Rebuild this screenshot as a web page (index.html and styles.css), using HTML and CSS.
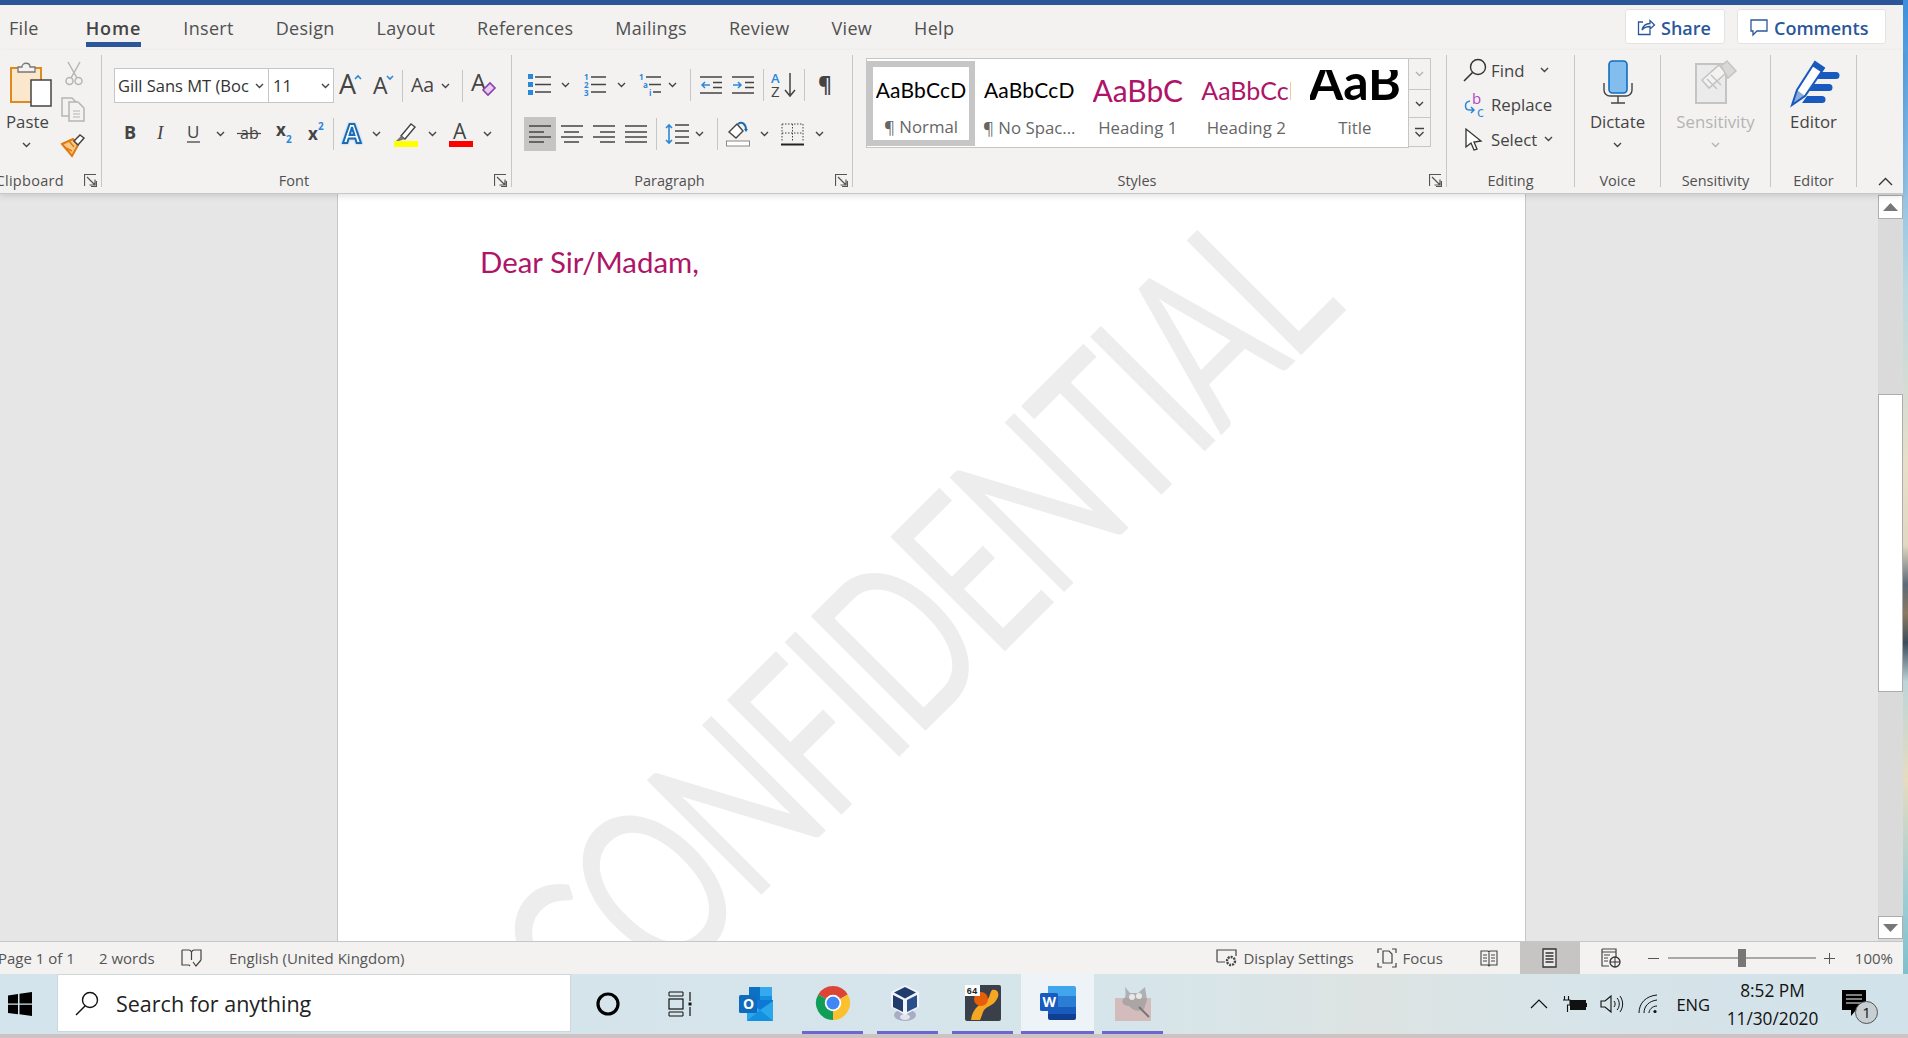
FILE: index.html
```html
<!DOCTYPE html>
<html lang="en">
<head>
<meta charset="utf-8">
<title>Word document</title>
<link rel="stylesheet" href="styles.css">
</head>
<body>
<svg class="defs" width="0" height="0" aria-hidden="true">
  <defs>
    <symbol id="chev" viewBox="0 0 9 6"><path d="M1 1l3.5 3.5L8 1" fill="none" stroke="#444" stroke-width="1.4"/></symbol>
    <symbol id="launch" viewBox="0 0 13 13"><path d="M.5 12V.5H12M3 3l8 8M11 5.5V11H5.5M12.5 7v5.500H7" fill="none" stroke="#555" stroke-width="1.200"/></symbol>
  </defs>
</svg>
<div class="screen">
  <div class="upper">
    <div class="window">
      <div class="accent"></div>
      <nav class="tabs">
        <span class="tab tab-file">File</span>
        <span class="tab tab-active">Home</span>
        <span class="tab">Insert</span>
        <span class="tab">Design</span>
        <span class="tab">Layout</span>
        <span class="tab">References</span>
        <span class="tab">Mailings</span>
        <span class="tab">Review</span>
        <span class="tab">View</span>
        <span class="tab">Help</span>
        <div class="share-btns">
          <button class="pill pill-share">
            <svg width="18" height="17" viewBox="0 0 18 17"><path d="M6 3H1.500v12.500H13V11M5 11c1-4 4-6.500 8-6.500V1.500l4.500 4.500L13 10V7.500c-3 0-6 1-8 3.500z" fill="none" stroke="#2b579a" stroke-width="1.300"/></svg>
            Share</button>
          <button class="pill pill-comments">
            <svg width="18" height="17" viewBox="0 0 18 17"><path d="M1 1h16v11H7l-4 4v-4H1z" fill="none" stroke="#2b579a" stroke-width="1.300"/></svg>
            Comments</button>
        </div>
      </nav>

      <section class="ribbon">
        <div class="group group-clip">
          <div class="clip-body">
            <div class="big paste">
              <svg width="42" height="46" viewBox="0 0 42 46">
                <rect x="1" y="7" width="30" height="34" fill="#fbe8cc" stroke="#e08a1e" stroke-width="2"/>
                <path d="M8 11V6h4c0-5 8-5 8 0h5v5z" fill="#f3f2f1" stroke="#777" stroke-width="1.300"/>
                <rect x="21" y="19" width="20" height="26" fill="#fff" stroke="#444" stroke-width="1.500"/>
              </svg>
              <span class="big-label">Paste</span>
              <svg class="big-chev" width="9" height="6"><use href="#chev"/></svg>
            </div>
            <div class="clip-tools">
              <svg width="18" height="25" viewBox="0 0 18 25"><path d="M3 1l9 16M15 1L6 17" fill="none" stroke="#b5b5b5" stroke-width="1.500"/><circle cx="4.500" cy="20" r="3.500" fill="none" stroke="#b5b5b5" stroke-width="1.500"/><circle cx="13.500" cy="20" r="3.500" fill="none" stroke="#b5b5b5" stroke-width="1.500"/></svg>
              <svg width="25" height="25" viewBox="0 0 25 25"><path d="M11 19H1V1h10l4 4" fill="none" stroke="#b5b5b5" stroke-width="1.500"/><path d="M8 5h9l6 6v13H8z" fill="#f3f2f1" stroke="#b5b5b5" stroke-width="1.500"/><path d="M12 14h7M12 17h7M12 20h7" stroke="#b5b5b5"/></svg>
              <svg width="25" height="24" viewBox="0 0 25 24"><path d="M1 11l11-5 5 6-6 11z" fill="#f9c98a" stroke="#e07b10" stroke-width="2"/><path d="M5 15l6 3M8 8l5 6" stroke="#e07b10" stroke-width="1.500"/><path d="M13 8l6-6 4 3-6 7z" fill="#fff" stroke="#444" stroke-width="1.500"/></svg>
            </div>
          </div>
          <div class="label-row"><span class="label label-clip">Clipboard</span><svg class="launch" width="13" height="13"><use href="#launch"/></svg></div>
        </div>

        <div class="group group-font">
          <div class="rows">
            <div class="row">
              <div class="combo combo-font ml12"><span class="combo-text">Gill Sans MT (Boc</span><svg width="9" height="6"><use href="#chev"/></svg></div>
              <div class="combo combo-size"><span class="combo-text">11</span><svg width="9" height="6"><use href="#chev"/></svg></div>
              <svg class="ml5" width="23" height="26" viewBox="0 0 23 26"><text class="ico-t" x="0" y="21" font-size="27">A</text><path d="M16 6l3-3 3 3" fill="none" stroke="#2b88d8" stroke-width="1.600"/></svg>
              <svg class="ml11" width="21" height="26" viewBox="0 0 21 26"><text class="ico-t" x="0" y="21" font-size="23">A</text><path d="M14 3l3 3 3-3" fill="none" stroke="#2b88d8" stroke-width="1.600"/></svg>
              <span class="vsep ml8"></span>
              <svg class="ml8" width="28" height="26" viewBox="0 0 28 26"><text class="ico-t" x="0" y="19" font-size="19.500">Aa</text></svg>
              <svg class="ml2" width="9" height="6"><use href="#chev"/></svg>
              <span class="vsep ml12"></span>
              <svg class="ml8" width="25" height="26" viewBox="0 0 25 26"><text class="ico-t" x="0" y="18" font-size="24">A</text><path d="M12 17l7-7 5 5-7 7z" fill="#e6cdf0" stroke="#8b3fae" stroke-width="1.600"/></svg>
            </div>
            <div class="row row2">
              <svg class="ml22" width="12" height="18" viewBox="0 0 12 18"><text class="ico-t ico-b" x="0" y="14" font-size="18">B</text></svg>
              <svg class="ml21" width="10" height="18" viewBox="0 0 10 18"><text class="ico-t ico-i" x="0" y="14" font-size="19">I</text></svg>
              <svg class="ml20" width="13" height="20" viewBox="0 0 13 20"><text class="ico-t" x="0" y="14" font-size="17">U</text><path d="M0 18h13" stroke="#444" stroke-width="1.300"/></svg>
              <svg class="ml16" width="9" height="6"><use href="#chev"/></svg>
              <svg class="ml12" width="24" height="20" viewBox="0 0 24 20"><text class="ico-t" x="3" y="15" font-size="16">ab</text><path d="M0 9.500h24" stroke="#444" stroke-width="1.200"/></svg>
              <svg class="ml15" width="16" height="24" viewBox="0 0 16 24"><text class="ico-t ico-b" x="0" y="14" font-size="17">x</text><text class="ico-sub" x="10" y="21" font-size="10">2</text></svg>
              <svg class="ml16" width="16" height="24" viewBox="0 0 16 24"><text class="ico-t ico-b" x="0" y="18" font-size="17">x</text><text class="ico-sub" x="10" y="8" font-size="10">2</text></svg>
              <span class="vsep ml9"></span>
              <svg class="ml8" width="23" height="24" viewBox="0 0 23 24"><text class="ico-effect" x="1" y="21" font-size="26">A</text></svg>
              <svg class="ml7" width="9" height="6"><use href="#chev"/></svg>
              <svg class="ml13" width="24" height="26" viewBox="0 0 24 26"><path d="M7 15L17 3l4 3-10 12z" fill="#fff" stroke="#444" stroke-width="1.400"/><path d="M7 15l4 3-6 2H2z" fill="#777"/><rect y="20" width="24" height="6" fill="#ff0"/></svg>
              <svg class="ml10" width="9" height="6"><use href="#chev"/></svg>
              <svg class="ml12" width="24" height="26" viewBox="0 0 24 26"><text class="ico-t" x="4" y="18" font-size="21">A</text><rect y="20" width="24" height="6" fill="#f00"/></svg>
              <svg class="ml10" width="9" height="6"><use href="#chev"/></svg>
            </div>
          </div>
          <div class="label-row"><span class="label">Font</span><svg class="launch" width="13" height="13"><use href="#launch"/></svg></div>
        </div>

        <div class="group group-para">
          <div class="rows">
            <div class="row">
              <svg class="ml16" width="23" height="23" viewBox="0 0 23 23"><path d="M7 4h16M7 11.500h16M7 19h16" stroke="#444" stroke-width="1.500"/><path d="M0 1h5v5H0zM0 9h5v5H0zM0 17h5v5H0z" fill="#2b88d8"/></svg>
              <svg class="ml10" width="9" height="6"><use href="#chev"/></svg>
              <svg class="ml13" width="23" height="23" viewBox="0 0 23 23"><path d="M8 4h15M8 11.500h15M8 19h15" stroke="#444" stroke-width="1.500"/><text class="ico-num" x="1" y="7" font-size="8">1</text><text class="ico-num" x="1" y="15" font-size="8">2</text><text class="ico-num" x="1" y="23" font-size="8">3</text></svg>
              <svg class="ml11" width="9" height="6"><use href="#chev"/></svg>
              <svg class="ml12" width="23" height="23" viewBox="0 0 23 23"><path d="M8 4h15M11 11.500h12M15 19h8" stroke="#444" stroke-width="1.500"/><text class="ico-num" x="1" y="7" font-size="8">1</text><text class="ico-num" x="5" y="15" font-size="8">a</text><text class="ico-num" x="11" y="23" font-size="8">i</text></svg>
              <svg class="ml7" width="9" height="6"><use href="#chev"/></svg>
              <span class="vsep ml13"></span>
              <svg class="ml9" width="22" height="23" viewBox="0 0 22 23"><path d="M0 4h22M13 9.500h9M13 14.500h9M0 20h22" stroke="#444" stroke-width="1.500"/><path d="M10 12H2M5 9l-3 3 3 3" fill="none" stroke="#2b88d8" stroke-width="1.500"/></svg>
              <svg class="ml10" width="22" height="23" viewBox="0 0 22 23"><path d="M0 4h22M13 9.500h9M13 14.500h9M0 20h22" stroke="#444" stroke-width="1.500"/><path d="M1 12h8M6 9l3 3-3 3" fill="none" stroke="#2b88d8" stroke-width="1.500"/></svg>
              <span class="vsep ml9"></span>
              <svg class="ml7" width="26" height="26" viewBox="0 0 26 26"><text class="ico-num ico-lg" x="0" y="11" font-size="13">A</text><text class="ico-t" x="0" y="25" font-size="15">Z</text><path d="M19 1v23M14 18l5 6 5-6" fill="none" stroke="#444" stroke-width="1.500"/></svg>
              <span class="vsep ml7"></span>
              <svg class="ml13" width="15" height="22" viewBox="0 0 15 22"><text class="ico-t ico-b" x="0" y="18" font-size="21">¶</text></svg>
            </div>
            <div class="row row2">
              <span class="sel-align ml12">
                <svg width="22" height="20" viewBox="0 0 22 20"><path d="M0 2h22M0 8h15M0 13h22M0 18h15" stroke="#444" stroke-width="1.600"/></svg>
              </span>
              <svg class="ml5" width="22" height="20" viewBox="0 0 22 20"><path d="M0 2h22M3 8h15M0 13h22M3 18h15" stroke="#444" stroke-width="1.600"/></svg>
              <svg class="ml10" width="22" height="20" viewBox="0 0 22 20"><path d="M0 2h22M7 8h15M0 13h22M7 18h15" stroke="#444" stroke-width="1.600"/></svg>
              <svg class="ml10" width="22" height="20" viewBox="0 0 22 20"><path d="M0 2h22M0 8h22M0 13h22M0 18h22" stroke="#444" stroke-width="1.600"/></svg>
              <span class="vsep ml9"></span>
              <svg class="ml8" width="24" height="22" viewBox="0 0 24 22"><path d="M10 2h14M10 8h14M10 14h14M10 20h14" stroke="#444" stroke-width="1.600"/><path d="M4 2v18M1 5l3-3 3 3M1 17l3 3 3-3" fill="none" stroke="#2b88d8" stroke-width="1.600"/></svg>
              <svg class="ml6" width="9" height="6"><use href="#chev"/></svg>
              <span class="vsep ml13"></span>
              <svg class="ml8" width="24" height="26" viewBox="0 0 24 26"><path d="M3 11l8-8 6 7-7 7z" fill="#fff" stroke="#444" stroke-width="1.400"/><path d="M12 3c4-3 8 0 8 6" fill="none" stroke="#1b6cb5" stroke-width="2"/><path d="M18 8l2 3 2-3z" fill="#1b6cb5"/><rect x=".5" y="20" width="23" height="5" fill="#fff" stroke="#888"/></svg>
              <svg class="ml10" width="9" height="6"><use href="#chev"/></svg>
              <svg class="ml12" width="23" height="23" viewBox="0 0 23 23"><path d="M1 1h21v18M1 1v18M11.500 1v18M1 10h21" fill="none" stroke="#444" stroke-dasharray="1.500 1.500"/><path d="M0 21.500h23" stroke="#222" stroke-width="2"/></svg>
              <svg class="ml11" width="9" height="6"><use href="#chev"/></svg>
            </div>
          </div>
          <div class="label-row"><span class="label">Paragraph</span><svg class="launch" width="13" height="13"><use href="#launch"/></svg></div>
        </div>

        <div class="group group-styles">
          <div class="gallery">
            <div class="gallery-items">
              <div class="style-card style-selected"><span class="preview preview-normal">AaBbCcD</span><span class="style-name">¶ Normal</span></div>
              <div class="style-card"><span class="preview preview-normal">AaBbCcD</span><span class="style-name">¶ No Spac...</span></div>
              <div class="style-card"><span class="preview preview-h1">AaBbC</span><span class="style-name">Heading 1</span></div>
              <div class="style-card"><span class="preview preview-h2">AaBbCcI</span><span class="style-name">Heading 2</span></div>
              <div class="style-card"><span class="preview preview-title">AaB</span><span class="style-name style-name-title">Title</span></div>
            </div>
            <div class="gallery-scroll">
              <span class="gs-btn gs-up"><svg width="9" height="6" class="faded"><use href="#chev"/></svg></span>
              <span class="gs-btn gs-mid"><svg width="9" height="6"><use href="#chev"/></svg></span>
              <span class="gs-btn gs-more"><svg width="11" height="11" viewBox="0 0 11 11"><path d="M1 1.500h9M1.500 5l4 4 4-4" fill="none" stroke="#444" stroke-width="1.400"/></svg></span>
            </div>
          </div>
          <div class="label-row"><span class="label">Styles</span><svg class="launch" width="13" height="13"><use href="#launch"/></svg></div>
        </div>

        <div class="group group-edit">
          <div class="edit-rows">
            <div class="edit-row">
              <svg width="24" height="24" viewBox="0 0 24 24"><circle cx="15" cy="9" r="7.500" fill="none" stroke="#333" stroke-width="1.400"/><path d="M9.500 14.500L1 23" stroke="#333" stroke-width="1.600"/></svg>
              <span class="edit-text">Find</span>
              <svg class="ml16" width="9" height="6"><use href="#chev"/></svg>
            </div>
            <div class="edit-row">
              <svg width="24" height="26" viewBox="0 0 24 26"><text class="ico-purple" x="9" y="12" font-size="15">b</text><text class="ico-blue" x="14" y="25" font-size="14">c</text><path d="M7 9C1 10 1 18 7 18l4 0M8 15l3 3-3 3" fill="none" stroke="#2b88d8" stroke-width="1.500"/></svg>
              <span class="edit-text">Replace</span>
            </div>
            <div class="edit-row">
              <svg width="24" height="24" viewBox="0 0 24 24"><path d="M3 2v18l5-4 3 7 3-1-3-7 7-1z" fill="#fff" stroke="#333" stroke-width="1.300"/></svg>
              <span class="edit-text">Select</span>
              <svg class="ml7" width="9" height="6"><use href="#chev"/></svg>
            </div>
          </div>
          <div class="label-row label-plain"><span class="label">Editing</span></div>
        </div>

        <div class="group group-voice">
          <div class="big big-center">
            <svg width="30" height="44" viewBox="0 0 30 44"><rect x="6" y="1" width="18" height="32" rx="3.500" fill="#83bdee" stroke="#106ebe" stroke-width="1.600"/><path d="M1 23v7a6 6 0 0 0 6 6h16a6 6 0 0 0 6-6v-7M15 36v7M8 43h14" fill="none" stroke="#444" stroke-width="1.400"/></svg>
            <span class="big-label">Dictate</span>
            <svg class="big-chev" width="9" height="6"><use href="#chev"/></svg>
          </div>
          <div class="label-row label-plain"><span class="label">Voice</span></div>
        </div>

        <div class="group group-sens">
          <div class="big big-center big-dim">
            <svg width="42" height="44" viewBox="0 0 42 44"><path d="M1 4h30v39H1z" fill="#ebebeb" stroke="#c4c4c4" stroke-width="2"/><path d="M7 20l17-15 7 8-17 15z" fill="#f3f2f1" stroke="#c4c4c4" stroke-width="1.600"/><path d="M12 19l10 10M16 15l10 10" stroke="#c4c4c4" stroke-width="1.500"/><path d="M26 6l6-5 9 10-8 7z" fill="#d8d8d8" stroke="#c4c4c4" stroke-width="1.500"/></svg>
            <span class="big-label">Sensitivity</span>
            <svg class="big-chev" width="9" height="6"><use href="#chev"/></svg>
          </div>
          <div class="label-row label-plain"><span class="label">Sensitivity</span></div>
        </div>

        <div class="group group-editor">
          <div class="big big-center">
            <svg width="46" height="46" viewBox="0 0 46 46"><path d="M1 45l5-15L24 2l9 6L14 36z" fill="#fff" stroke="#185abd" stroke-width="2"/><path d="M1 45l5-15 8 6z" fill="#185abd" opacity=".5"/><path d="M24 2l9 6-3 4-9-6z" fill="#185abd"/><path d="M31 12h14a3.500 3.500 0 0 1 0 7H26zM23 24h15a3.500 3.500 0 0 1 0 7H18zM16 36h15a3.500 3.500 0 0 1 0 7H11z" fill="#185abd"/></svg>
            <span class="big-label big-label-editor">Editor</span>
          </div>
          <div class="label-row label-plain"><span class="label">Editor</span></div>
        </div>

        <svg class="collapse" width="15" height="9" viewBox="0 0 15 9"><path d="M1 8l6.500-6.500L14 8" fill="none" stroke="#333" stroke-width="1.300"/></svg>
      </section>

      <main class="doc">
        <div class="canvas">
          <article class="page">
            <p class="greeting">Dear Sir/Madam,</p>
            <div class="watermark">CONFIDENTIAL</div>
          </article>
        </div>
        <aside class="scrollbar">
          <span class="sb-btn sb-up"><svg width="15" height="8" viewBox="0 0 15 8"><path d="M0 8l7.500-8L15 8z" fill="#777"/></svg></span>
          <span class="sb-thumb"></span>
          <span class="sb-btn sb-down"><svg width="15" height="8" viewBox="0 0 15 8"><path d="M0 0l7.500 8L15 0z" fill="#777"/></svg></span>
        </aside>
      </main>

      <footer class="status">
        <span class="st-page">Page 1 of 1</span>
        <span class="st-words">2 words</span>
        <svg class="st-book" width="21" height="19" viewBox="0 0 21 19"><path d="M1 1h7c1 0 2 1 2.500 2C11 2 12 1 13 1h7v10M1 1v15h7l1 1M10.500 3v8M12 13l3 4 5-6" fill="none" stroke="#444" stroke-width="1.200"/></svg>
        <span class="st-lang">English (United Kingdom)</span>
        <div class="st-right">
          <svg width="22" height="19" viewBox="0 0 22 19"><path d="M1 13V1h19v6M1 13h8" fill="none" stroke="#444" stroke-width="1.200"/><circle cx="15" cy="12" r="4" fill="none" stroke="#444" stroke-width="2.400" stroke-dasharray="2 1"/></svg>
          <span class="st-text st-display">Display Settings</span>
          <svg class="st-focus" width="20" height="20" viewBox="0 0 20 20"><path d="M1 5V1h4M15 1h4v4M1 15v4h4M15 19h4v-4M6 15V3h6l3 3v9z" fill="none" stroke="#444" stroke-width="1.200"/></svg>
          <span class="st-text st-focus-text">Focus</span>
          <svg class="st-read" width="18" height="17" viewBox="0 0 18 17"><path d="M1 1h7l1 1 1-1h7v14h-7l-1 1-1-1H1zM9 2v13M3 5h4M3 8h4M3 11h4M11 5h4M11 8h4M11 11h4" fill="none" stroke="#444" stroke-width="1.100"/></svg>
          <span class="st-print"><svg width="15" height="20" viewBox="0 0 15 20"><path d="M1 1h13v18H1z" fill="#e8e8e8" stroke="#333" stroke-width="1.300"/><path d="M3.500 5h8M3.500 8h8M3.500 11h8M3.500 14h8" stroke="#333" stroke-width="1.300"/></svg></span>
          <svg class="st-web" width="20" height="20" viewBox="0 0 20 20"><path d="M1 1h14v9M1 1v17h7M1 4h14M3 7h6M3 10h4M3 13h4" fill="none" stroke="#444" stroke-width="1.200"/><circle cx="14" cy="14" r="5" fill="#f3f2f1" stroke="#333" stroke-width="1.300"/><path d="M9 14h10M14 9v10" stroke="#333"/></svg>
          <span class="zoom-minus"></span>
          <span class="zoom-track"><span class="zoom-thumb"></span></span>
          <span class="zoom-plus"></span>
          <span class="st-text st-pct">100%</span>
        </div>
      </footer>
    </div>
    <div class="wallpaper"></div>
  </div>

  <div class="taskbar">
    <svg class="win-logo" width="24" height="24" viewBox="0 0 24 24"><path d="M0 3.500l10-1.500v9.500H0zM11.500 1.800L24 0v11.500H11.500zM0 12.800h10v9.500L0 21zM11.500 12.800H24V24l-12.500-1.800z" fill="#000"/></svg>
    <div class="search">
      <svg width="24" height="25" viewBox="0 0 24 25"><circle cx="15" cy="9" r="7.500" fill="none" stroke="#111" stroke-width="1.400"/><path d="M10 15L1 24" stroke="#111" stroke-width="1.500"/></svg>
      <span class="search-text">Search for anything</span>
    </div>
    <svg class="cortana" width="24" height="24" viewBox="0 0 24 24"><circle cx="12" cy="12" r="10" fill="none" stroke="#000" stroke-width="3.200"/></svg>
    <svg class="taskview" width="24" height="26" viewBox="0 0 24 26"><path d="M1 1h14M1 5h14M1 21h14M1 25h14M15 1v4M1 1v4M15 21v4M1 21v4" fill="none" stroke="#111" stroke-width="1"/><rect x="1" y="8" width="14" height="10" fill="none" stroke="#111" stroke-width="1.200"/><path d="M22 1v9M22 16v9" stroke="#111" stroke-width="1.200"/><rect x="20.500" y="11.500" width="3" height="3" fill="#111"/></svg>
    <svg class="outlook" width="34" height="36" viewBox="0 0 34 36"><rect x="10" y="1" width="23" height="18" fill="#0a72c6"/><rect x="21" y="1" width="12" height="9" fill="#35a8ee"/><rect x="21" y="10" width="12" height="9" fill="#1490df"/><path d="M8 15h26v20H8z" fill="#28a8ea"/><path d="M8 35l13-11 13 11z" fill="#1490df"/><path d="M8 15l13 9 13-9v-1H8z" fill="#0f78d4"/><rect y="9" width="18" height="18" rx="1.500" fill="#0f6cbd"/><text class="ico-white" x="4" y="23" font-size="14">O</text></svg>
    <div class="task task-chrome"><svg width="34" height="34" viewBox="0 0 33 33"><path d="M16.500 16.500L2.200 8.250A16.500 16.500 0 0 1 30.800 8.250z" fill="#db4437"/><path d="M16.500 16.500L30.800 8.250A16.500 16.500 0 0 1 16.500 33z" fill="#fbc02d"/><path d="M16.500 16.500L16.500 33A16.500 16.500 0 0 1 2.200 8.250z" fill="#0f9d58"/><circle cx="16.500" cy="16.500" r="8" fill="#fff"/><circle cx="16.500" cy="16.500" r="6.300" fill="#4285f4"/></svg></div>
    <div class="task task-vbox"><svg width="32" height="38" viewBox="0 0 32 38"><ellipse cx="16" cy="31" rx="11" ry="6" fill="#a9acc4"/><ellipse cx="16" cy="33" rx="5" ry="3" fill="#e3e6ee"/><path d="M16 1l14 7v15l-14 8-14-8V8z" fill="#f1f4f9"/><path d="M16 3l11 5.500-11 6-11-6z" fill="#1f3c6d"/><path d="M4 11l10 5v12L4 23z" fill="#1f3c6d"/><path d="M28 11l-10 5v12l10-5z" fill="#2b4f8a"/></svg></div>
    <div class="task task-orange"><svg width="36" height="36" viewBox="0 0 36 36"><rect width="36" height="36" rx="2" fill="#3b3f4a"/><path d="M27 5c6-1 8 4 5 9-4 8-11 6-14 13-1 3-2 6-3 8H6c1-8 6-15 13-18 6-2 5-8 8-12z" fill="#f5a623"/><circle cx="16" cy="14" r="7" fill="#e85d0a"/><rect width="15" height="11" fill="#fff"/><text class="ico-tag" x="1.500" y="9" font-size="9">64</text></svg></div>
    <div class="task task-word"><svg width="36" height="36" viewBox="0 0 36 36"><path d="M8 1h26a2 2 0 0 1 2 2v8H8z" fill="#41a5ee"/><rect x="8" y="11" width="28" height="12" fill="#2b7cd3"/><rect x="8" y="22" width="28" height="7" fill="#185abd"/><path d="M8 29h28v4a2 2 0 0 1-2 2H10a2 2 0 0 1-2-2z" fill="#103f91"/><rect y="8" width="18" height="18" rx="1.500" fill="#185abd"/><text class="ico-white" x="2.500" y="22" font-size="14">W</text></svg></div>
    <div class="task task-gimp"><svg width="36" height="36" viewBox="0 0 36 36"><rect y="13" width="36" height="23" fill="#d4bcbc"/><path d="M10 2l5 6h8l7-6 2 13-3 9c-5 3-11 2-15-3-5 0-8-3-6-7 3-1 3-4 2-12z" fill="#9b9b9b" opacity=".7"/><circle cx="17" cy="12" r="3" fill="#e8e8e8"/><circle cx="24" cy="11" r="3" fill="#e8e8e8"/><path d="M24 22l10 10" stroke="#777" stroke-width="2"/></svg></div>
    <div class="tray">
      <svg width="18" height="10" viewBox="0 0 18 10"><path d="M1 9l8-8 8 8" fill="none" stroke="#111" stroke-width="1.200"/></svg>
      <svg class="tray-batt" width="24" height="16" viewBox="0 0 24 16"><path d="M1.500 0v4M5.500 0v4M0 4h7v5H4.500v7M7 13h1" fill="#d3e4ec" stroke="#111" stroke-width="1.100"/><rect x="7" y="4" width="16" height="10" fill="#111"/><rect x="23" y="7" width="1" height="4" fill="#111"/></svg>
      <svg class="tray-vol" width="22" height="20" viewBox="0 0 22 20"><path d="M1 7h4l6-5v16l-6-5H1z" fill="none" stroke="#111" stroke-width="1.100"/><path d="M14 7c1.500 2 1.500 4 0 6M17 4c3 3 3 9 0 12M20 2c3.500 5 3.500 11 0 16" fill="none" stroke="#111"/></svg>
      <svg class="tray-wifi" width="20" height="20" viewBox="0 0 20 20"><path d="M1 19C1 9 8 2 19 1M6 19c0-7 5-12 13-13M11 19c0-3 3-7 8-7" fill="none" stroke="#111" stroke-width="1"/><circle cx="17" cy="17.500" r="1.600" fill="#111"/></svg>
      <span class="tray-lang">ENG</span>
      <div class="clock"><span>8:52 PM</span><span>11/30/2020</span></div>
      <span class="notif">
        <svg width="24" height="26" viewBox="0 0 24 26"><path d="M0 0h24v20H14l-5 6v-6H0z" fill="#000"/><path d="M4 5h16M4 9h16M4 13h16" stroke="#fff"/></svg>
        <span class="notif-badge">1</span>
      </span>
    </div>
  </div>
  <div class="desk-strip"></div>
</div>
</body>
</html>
```

FILE: styles.css
```css
* { box-sizing: border-box; }
html, body { margin: 0; padding: 0; }
body { width: 1908px; height: 1038px; overflow: hidden; font-family: "Open Sans", "Liberation Sans", sans-serif; color: #444; }
.defs { position: absolute; }
svg { display: block; flex: none; overflow: visible; }
.screen { display: flex; flex-direction: column; height: 1038px; }
.upper { display: flex; height: 974px; }
.window { width: 1903px; display: flex; flex-direction: column; background: #f3f2f1; }
.wallpaper { width: 5px; background: linear-gradient(180deg, #3c8fdc 0%, #7fb8e6 15%, #bcd9e0 30%, #e8dfc8 48%, #e0d8c0 56%, #5b6a78 60%, #8a7a60 63%, #3b4d5c 66%, #bcd5d8 70%, #e5dcc0 80%, #9ecdd4 92%, #7fc0cc 100%); }
.accent { height: 5px; background: #2b579a; flex: none; }

/* tabs */
.tabs { display: flex; height: 45px; flex: none; gap: 42px; padding-left: 9px; }
.tab { height: 42px; border-bottom: 5px solid transparent; padding-top: 11px; font-size: 18px; line-height: 24px; color: #505050; white-space: nowrap; letter-spacing: .3px; }
.tab-file { margin-right: 5px; }
.tab-active { font-weight: 600; border-bottom-color: #2b579a; color: #444; letter-spacing: .9px; }
.share-btns { margin-left: auto; display: flex; gap: 12px; margin-right: 17px; padding-top: 4px; }
.pill { height: 35px; display: flex; align-items: center; gap: 6px; border: 1px solid #e4e3e2; border-radius: 3px; background: #fff; color: #2b579a; font: 600 18px "Open Sans", sans-serif; padding: 2px 0 0 11px; }
.pill-share { width: 100px; }
.pill-comments { width: 149px; padding-left: 12px; }

/* ribbon */
.ribbon { display: flex; height: 143px; flex: none; padding: 5px 0 6px; position: relative; z-index: 2; box-shadow: 0 1px 0 #c8c8c8, 0 3px 6px rgba(0,0,0,.12); background: #f3f2f1; }
.group { display: flex; flex-direction: column; height: 132px; border-right: 1px solid #c6c6c6; flex: none; }
.group-clip { width: 102px; }
.group-font { width: 410px; }
.group-para { width: 341px; }
.group-styles { width: 594px; }
.group-edit { width: 128px; }
.group-voice { width: 86px; }
.group-sens { width: 110px; }
.group-editor { width: 86px; }
.label-row { display: flex; align-items: center; height: 24px; margin-top: auto; }
.label { flex: 1; text-align: center; font-size: 14.500px; line-height: 20px; color: #505050; margin-top: 12px; white-space: nowrap; }
.label-row > .launch { margin: 10px 4px 0 8px; }
.label-clip { flex: none; width: 64px; display: flex; justify-content: flex-end; letter-spacing: .3px; }
.group-clip .launch { margin-left: 20px; }

.clip-body { display: flex; padding-top: 6px; }
.paste { width: 61px; padding-left: 10px; }
.big { display: flex; flex-direction: column; }
.big-center { align-items: center; padding-top: 5px; }
.big-label { font-size: 16.800px; line-height: 20px; color: #444; margin-top: 8px; white-space: nowrap; }
.paste .big-label { margin-left: -10px; margin-top: 5px; padding-left: 6px; }
.big-chev { margin-top: 10px; }
.paste .big-chev { margin-left: 12px; }
.clip-tools { display: flex; flex-direction: column; align-items: center; width: 25px; gap: 11px; }

.rows { display: flex; flex-direction: column; padding-top: 13px; }
.row { display: flex; align-items: center; height: 35px; }
.row2 { height: 34px; margin-top: 14px; }
.group-para .rows { padding-top: 12px; }
.group-para .row2 { margin-top: 15px; }
.vsep { width: 1px; height: 32px; background: #c6c6c6; flex: none; }
.combo { height: 35px; background: #fff; border: 1px solid #c6c6c6; display: flex; align-items: center; flex: none; }
.combo-font { width: 155px; padding: 0 4px 0 3px; justify-content: space-between; }
.combo-size { width: 66px; margin-left: -1px; padding: 0 3px 0 4px; justify-content: space-between; }
.combo-text { font-size: 16.500px; color: #333; white-space: nowrap; overflow: hidden; width: 134px; }
.combo-size .combo-text { width: 30px; }

.ml2 { margin-left: 2px; } .ml5 { margin-left: 5px; } .ml6 { margin-left: 6px; } .ml7 { margin-left: 7px; }
.ml8 { margin-left: 8px; } .ml9 { margin-left: 9px; } .ml10 { margin-left: 10px; } .ml11 { margin-left: 11px; }
.ml12 { margin-left: 12px; } .ml13 { margin-left: 13px; } .ml15 { margin-left: 15px; } .ml16 { margin-left: 16px; }
.ml20 { margin-left: 20px; } .ml21 { margin-left: 21px; } .ml22 { margin-left: 22px; }

.ico-t { font-family: "Open Sans", sans-serif; fill: #444; }
.ico-b { font-weight: 700; }
.ico-i { font-style: italic; font-family: "Liberation Serif", serif; }
.ico-sub { font-family: "Open Sans", sans-serif; font-weight: 700; fill: #2b88d8; }
.ico-num { font-family: "Open Sans", sans-serif; font-weight: 700; fill: #2b88d8; }
.ico-lg { font-weight: 600; }
.ico-effect { font-family: "Open Sans", sans-serif; font-weight: 700; fill: #fff; stroke: #1b6cb5; stroke-width: 2px; filter: drop-shadow(0 0 1px #8cc4ee); }
.ico-purple { font-family: "Open Sans", sans-serif; fill: #b146c2; }
.ico-blue { font-family: "Open Sans", sans-serif; fill: #2b88d8; }
.ico-white { font-family: "Open Sans", sans-serif; font-weight: 700; fill: #fff; }
.ico-tag { font-family: "Liberation Mono", monospace; font-weight: 700; fill: #222; }
.sel-align { width: 32px; height: 34px; background: #c6c5c3; display: flex; align-items: center; justify-content: center; flex: none; }

/* styles gallery */
.group-styles .gallery { margin: 3px 0 0 13px; display: flex; width: 566px; height: 90px; }
.gallery-items { width: 543px; display: flex; background: #fff; border: 1px solid #c6c6c6; padding-top: 2px; overflow: hidden; }
.style-card { width: 108.500px; height: 86px; display: flex; flex-direction: column; align-items: center; overflow: hidden; flex: none; position: relative; }
.style-selected { border: 6px solid #c6c6c6; width: 108px; background: #fff; height: 85px; }
.preview { height: 47px; padding-bottom: 2px; display: flex; align-items: center; justify-content: center; white-space: nowrap; font-family: Lato, sans-serif; color: #000; width: 90px; overflow: hidden; flex: none; margin-top: 6px; }
.style-selected .preview { margin-top: 0; }
.preview-normal { font-size: 21px; letter-spacing: .2px; }
.preview-h1 { font-size: 30px; color: #ae1468; }
.preview-h2 { font-size: 25px; color: #ae1468; justify-content: flex-start; }
.preview-title { font-size: 50px; height: 39px; padding-bottom: 0; margin-top: 9px; font-weight: 700; align-items: flex-start; line-height: 22px; }
.style-name { font-size: 16.800px; line-height: 20px; color: #666; margin-top: 4px; white-space: nowrap; }
.style-selected .style-name { margin-top: 3px; }
.style-name-title { margin-top: 9px; }
.gallery-scroll { display: flex; flex-direction: column; width: 23px; margin-left: -1px; }
.gs-btn { border: 1px solid #c6c6c6; display: flex; align-items: center; justify-content: center; background: #f3f2f1; flex: none; }
.gs-up { height: 32px; }
.gs-mid { height: 29px; margin-top: -1px; }
.gs-more { height: 30px; margin-top: -1px; }
.faded { opacity: .35; }

/* editing */
.edit-rows { display: flex; flex-direction: column; padding: 0 0 0 16px; margin-top: -2px; }
.edit-row { display: flex; align-items: center; height: 34.500px; }
.edit-text { font-size: 16.800px; margin-left: 4px; color: #444; }
.big-dim .big-label { color: #b4b4b4; }
.big-dim .big-chev { opacity: .35; }
.big-label-editor { margin-top: 6px; }
.collapse { margin: auto 0 0 21px; align-self: flex-end; position: relative; top: -1px; }

/* doc */
.doc { flex: 1; display: flex; min-height: 0; }
.canvas { flex: 1; background: #e6e6e6; padding-left: 337px; overflow: hidden; }
.page { width: 1189px; height: 100%; background: #fff; border-left: 1px solid #c6c6c6; border-right: 1px solid #c6c6c6; position: relative; overflow: hidden; padding: 49px 0 0 142px; }
.greeting { margin: 0; font: 400 29.400px/40px Lato, sans-serif; color: #ae1468; position: relative; z-index: 1; }
.watermark { position: absolute; left: 280px; top: 656px; font: 400 226px/1 Lato, sans-serif; color: #ededed; white-space: nowrap; transform-origin: 0 100%; transform: rotate(-45deg) scaleX(.695); letter-spacing: -10px; }
.scrollbar { width: 25px; background: #dadada; display: flex; flex-direction: column; padding-top: 2px; }
.sb-btn { height: 24px; background: #fff; border: 1px solid #adadad; display: flex; align-items: center; justify-content: center; flex: none; }
.sb-thumb { height: 298px; background: #fff; border: 1px solid #adadad; margin-top: 175px; flex: none; }
.sb-down { margin-top: 224px; height: 23px; }

/* status */
.status { height: 33px; flex: none; display: flex; align-items: center; border-top: 1px solid #c6c6c6; font-size: 15px; color: #555; z-index: 2; background: #f3f2f1; white-space: nowrap; }
.st-page { margin-left: -2px; width: 101px; }
.st-words { width: 82px; }
.st-book { margin-right: 27px; }
.st-right { margin-left: auto; display: flex; align-items: center; height: 100%; padding-right: 10px; }
.st-display { margin-left: 5px; }
.st-focus { margin-left: 23px; }
.st-focus-text { margin-left: 6px; }
.st-read { margin-left: 37px; }
.st-print { width: 60px; height: 100%; background: #c6c5c3; margin-left: 22px; display: flex; align-items: center; justify-content: center; }
.st-web { margin-left: 21px; }
.zoom-minus { width: 11px; height: 1px; background: #555; margin-left: 27px; }
.zoom-track { width: 148px; height: 2px; background: #a8a8a8; margin-left: 9px; position: relative; }
.zoom-thumb { position: absolute; left: 70px; top: -8px; width: 8px; height: 18px; background: #777; }
.zoom-plus { width: 11px; height: 11px; margin-left: 8px; background: linear-gradient(#555,#555) center/11px 1px no-repeat, linear-gradient(#555,#555) center/1px 11px no-repeat; }
.st-pct { margin-left: 20px; }

/* taskbar */
.taskbar { height: 60px; flex: none; display: flex; align-items: center; background: linear-gradient(90deg, #d3e4ec 0%, #d6e5ea 60%, #dde3e2 72%, #d8e4e8 80%, #d1e2ea 100%); }
.win-logo { margin-left: 8px; }
.search { width: 514px; height: 58px; margin-left: 25px; background: #fff; display: flex; align-items: center; padding-left: 17px; border: 1px solid #cfd6da; flex: none; align-self: flex-start; }
.search-text { font-size: 21.500px; color: #222; margin-left: 17px; }
.cortana { margin-left: 25px; }
.taskview { margin-left: 48px; }
.outlook { margin-left: 47px; }
.task { width: 61px; height: 60px; display: flex; align-items: center; justify-content: center; border-bottom: 3px solid #6b66d0; flex: none; }
.task-chrome { margin-left: 29px; }
.task-vbox { margin-left: 14px; padding-right: 5px; }
.task-orange { margin-left: 14px; }
.task-word { width: 73px; margin-left: 8px; background: #edf3f6; }
.task-gimp { margin-left: 8px; }
.tray { margin-left: auto; display: flex; align-items: center; height: 100%; padding-right: 30px; color: #111; }
.tray-batt { margin-left: 15px; }
.tray-vol { margin-left: 13px; }
.tray-wifi { margin-left: 16px; }
.tray-lang { font-size: 16.500px; margin-left: 18px; }
.clock { display: flex; flex-direction: column; align-items: center; font-size: 17.300px; line-height: 28px; margin-left: 15px; width: 95px; padding-top: 2px; }
.notif { position: relative; margin-left: 22px; width: 36px; height: 36px; padding-top: 4px; }
.notif-badge { position: absolute; left: 13px; top: 15px; width: 23px; height: 23px; border-radius: 50%; background: #c8cfd2; border: 1px solid #555; color: #111; font-size: 15px; line-height: 21px; text-align: center; }
.desk-strip { flex: 1; background: #d0c2c2; }
```
